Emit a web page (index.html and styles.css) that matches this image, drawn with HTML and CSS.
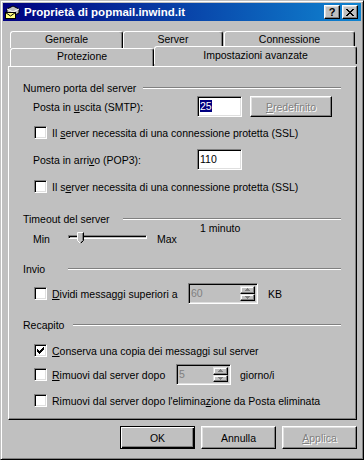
FILE: index.html
```html
<!DOCTYPE html>
<html lang="it">
<head>
    <meta charset="UTF-8">
    <meta name="viewport" content="width=device-width, initial-scale=1.0">
    <title>Proprietà di popmail.inwind.it</title>
    <link rel="stylesheet" href="styles.css">
</head>
<body>
<div class="window">
    <div class="titlebar">
        <svg class="app-icon" width="16" height="16" viewBox="0 0 16 16">
            <polygon points="3,5 9,2 15,5 15,9 9,12 3,9" fill="#c0c0c0" stroke="#000" stroke-width="1"/>
            <polyline points="3,5 9,8 15,5" fill="none" stroke="#fff"/>
            <line x1="9" y1="8" x2="9" y2="12" stroke="#808080"/>
            <rect x="1.5" y="8.5" width="10" height="6" fill="#ffff80" stroke="#000"/>
            <polyline points="1.5,8.5 6.5,12 11.5,8.5" fill="none" stroke="#000"/>
        </svg>
        <span class="title">Proprietà di popmail.inwind.it</span>
        <div class="caption-btns">
            <span class="cap-btn help">?</span>
            <span class="cap-btn close">
                <svg width="8" height="7" viewBox="0 0 8 7">
                    <path d="M0 0h2v1H0z M6 0h2v1H6z M1 1h2v1H1z M5 1h2v1H5z M2 2h4v1H2z M3 3h2v1H3z M2 4h4v1H2z M1 5h2v1H1z M5 5h2v1H5z M0 6h2v1H0z M6 6h2v1H6z" fill="#000"/>
                </svg>
            </span>
        </div>
    </div>

    <div class="content">
        <div class="tabs">
            <div class="tab-row">
                <div class="tab t-generale">Generale</div>
                <div class="tab t-server">Server</div>
                <div class="tab t-conn">Connessione</div>
            </div>
            <div class="tab-row">
                <div class="tab t-prot">Protezione</div>
                <div class="tab active t-imp">Impostazioni avanzate</div>
            </div>
        </div>

        <div class="panel">
            <div class="group-head">
                <span class="head-label w-porta">Numero porta del server</span>
                <span class="etched"></span>
            </div>
            <div class="field-row smtp">
                <span class="field-label">Posta in <u>u</u>scita (SMTP):</span>
                <span class="edit"><span class="selected">25</span></span>
                <span class="btn disabled predef"><u>P</u>redefinito</span>
            </div>
            <div class="check-row ssl1">
                <span class="checkbox"></span>
                <span>Il <u>s</u>erver necessita di una connessione protetta (SSL)</span>
            </div>
            <div class="field-row pop3">
                <span class="field-label">Posta in arri<u>v</u>o (POP3):</span>
                <span class="edit">110</span>
            </div>
            <div class="check-row ssl2">
                <span class="checkbox"></span>
                <span>Il s<u>e</u>rver necessita di una connessione protetta (SSL)</span>
            </div>

            <div class="group-head timeout-head">
                <span class="head-label w-timeout">Timeout del server</span>
                <span class="etched"></span>
            </div>
            <div class="minute-label">1 minuto</div>
            <div class="slider-row">
                <span class="slider-min">Min</span>
                <div class="slider">
                    <div class="track"></div>
                    <svg class="thumb" width="7" height="12" viewBox="0 0 7 12">
                        <polygon points="0,0 7,0 7,8 3.5,11.5 0,8" fill="#c0c0c0"/>
                        <polyline points="0.5,8.5 0.5,0.5 6.5,0.5" fill="none" stroke="#fff"/>
                        <polyline points="5.5,1 5.5,8.5 3.5,10.5" fill="none" stroke="#808080"/>
                        <polyline points="6.5,0.5 6.5,8.5 3.5,11.5" fill="none" stroke="#000"/>
                        <line x1="0.5" y1="8.5" x2="3.5" y2="11.5" stroke="#fff"/>
                    </svg>
                </div>
                <span class="slider-max">Max</span>
            </div>

            <div class="group-head invio-head">
                <span class="head-label w-invio">Invio</span>
                <span class="etched"></span>
            </div>
            <div class="check-row spin-row dividi">
                <span class="checkbox"></span>
                <span class="check-label w-dividi"><u>D</u>ividi messaggi superiori a</span>
                <span class="spin w-60">
                    <span class="spin-text">60</span>
                    <span class="spin-btns">
                        <span class="spin-btn"><svg width="5" height="3" viewBox="0 0 5 3"><path d="M2 0h1v1h1v1h1v1H0V2h1V1h1z" fill="#808080"/></svg></span>
                        <span class="spin-btn"><svg width="5" height="3" viewBox="0 0 5 3"><path d="M0 0h5v1H4v1H3v1H2V2H1V1H0z" fill="#808080"/></svg></span>
                    </span>
                </span>
                <span class="unit kb">KB</span>
            </div>

            <div class="group-head recapito-head">
                <span class="head-label w-recapito">Recapito</span>
                <span class="etched"></span>
            </div>
            <div class="check-row conserva">
                <span class="checkbox">
                    <svg width="7" height="7" viewBox="0 0 7 7">
                        <path d="M0 2h1v3H0z M1 3h1v3H1z M2 4h1v3H2z M3 3h1v3H3z M4 2h1v3H4z M5 1h1v3H5z M6 0h1v3H6z" fill="#000"/>
                    </svg>
                </span>
                <span><u>C</u>onserva una copia dei messaggi sul server</span>
            </div>
            <div class="check-row spin-row rimuovi">
                <span class="checkbox"></span>
                <span class="check-label w-rimuovi"><u>R</u>imuovi dal server dopo</span>
                <span class="spin w-5">
                    <span class="spin-text">5</span>
                    <span class="spin-btns">
                        <span class="spin-btn"><svg width="5" height="3" viewBox="0 0 5 3"><path d="M2 0h1v1h1v1h1v1H0V2h1V1h1z" fill="#808080"/></svg></span>
                        <span class="spin-btn"><svg width="5" height="3" viewBox="0 0 5 3"><path d="M0 0h5v1H4v1H3v1H2V2H1V1H0z" fill="#808080"/></svg></span>
                    </span>
                </span>
                <span class="unit giorni">giorno/i</span>
            </div>
            <div class="check-row elimina">
                <span class="checkbox"></span>
                <span>Rimuovi dal server dopo l'elimina<u>z</u>ione da Posta eliminata</span>
            </div>
        </div>

        <div class="buttons">
            <span class="btn default">OK</span>
            <span class="btn">Annulla</span>
            <span class="btn disabled"><u>A</u>pplica</span>
        </div>
    </div>
</div>
</body>
</html>
```

FILE: styles.css
```css
* {
    box-sizing: border-box;
}
body {
    margin: 0;
    background: #c0c0c0;
    font-family: "Liberation Sans", Arial, sans-serif;
    font-size: 10.5px;
    color: #000;
}
u {
    text-underline-offset: 1px;
}
.window {
    width: 364px;
    height: 460px;
    background: #c0c0c0;
    border: 1px solid;
    border-color: #c0c0c0 #000 #000 #c0c0c0;
    box-shadow: inset 1px 1px #fff, inset -1px -1px #808080;
    padding: 2px;
}

/* title bar */
.titlebar {
    height: 18px;
    display: flex;
    align-items: center;
    padding: 0 3px 0 1px;
    background: linear-gradient(to right, #000080, #1084d0);
    color: #fff;
}
.app-icon {
    flex: none;
}
.title {
    margin-left: 4px;
    font-weight: bold;
    font-size: 11.5px;
    white-space: nowrap;
}
.caption-btns {
    margin-left: auto;
    display: flex;
    gap: 2px;
}
.cap-btn {
    width: 16px;
    height: 14px;
    display: flex;
    align-items: center;
    justify-content: center;
    background: #c0c0c0;
    color: #000;
    border: 1px solid;
    border-color: #fff #000 #000 #fff;
    box-shadow: inset -1px -1px #808080, inset 1px 1px #dfdfdf;
    font-weight: bold;
    font-size: 11px;
    line-height: 12px;
}

/* body */
.content {
    padding: 0 4px 0 5px;
}
.tabs {
    margin-top: 10px;
}
.tab-row {
    display: flex;
    padding-left: 2px;
}
.tab {
    height: 17px;
    border: 1px solid;
    border-bottom: none;
    border-color: #fff #000 transparent #fff;
    border-radius: 3px 3px 0 0;
    box-shadow: inset -1px 0 #808080;
    text-align: center;
    line-height: 15px;
    background: #c0c0c0;
}
.tab-row + .tab-row .tab {
    height: 18px;
}
.t-generale { width: 113px; }
.t-server { width: 100px; }
.t-conn { width: 131px; margin-left: 1px; }
.t-prot { width: 144px; }
.t-imp {
    width: 203px;
}
.tab.active {
    height: 21px;
    margin-top: -2px;
    margin-bottom: -1px;
    position: relative;
    z-index: 1;
    line-height: 17px;
}

.panel {
    width: 349px;
    height: 354px;
    border: 1px solid;
    border-color: #fff #000 #000 #fff;
    box-shadow: inset -1px -1px #808080;
    padding: 0 15px 0 14px;
    display: flex;
    flex-direction: column;
}
.group-head {
    height: 13px;
    display: flex;
    align-items: center;
    margin-top: 14px;
    flex: none;
}
.head-label {
    flex: none;
    white-space: nowrap;
}
.w-porta { width: 120px; }
.w-timeout { width: 100px; }
.w-invio { width: 45px; }
.w-recapito { width: 50px; }
.etched {
    flex: 1;
    height: 2px;
    border-top: 1px solid #808080;
    border-bottom: 1px solid #fff;
}
.timeout-head { margin-top: 19px; }
.invio-head { margin-top: 17px; }
.recapito-head { margin-top: 14px; }

.field-row {
    height: 21px;
    display: flex;
    align-items: center;
    padding-left: 10px;
    flex: none;
}
.smtp { margin-top: 2px; }
.pop3 { margin-top: 10px; }
.field-label {
    width: 164px;
    flex: none;
}
.edit {
    width: 45px;
    height: 21px;
    background: #fff;
    border: 1px solid;
    border-color: #808080 #fff #fff #808080;
    box-shadow: inset 1px 1px #000, inset -1px -1px #dfdfdf;
    padding: 2px 0 0 2px;
    line-height: 15px;
}
.selected {
    background: #000080;
    color: #fff;
}

.btn {
    width: 75px;
    height: 23px;
    display: flex;
    align-items: center;
    justify-content: center;
    background: #c0c0c0;
    border: 1px solid;
    border-color: #fff #000 #000 #fff;
    box-shadow: inset -1px -1px #808080, inset 1px 1px #dfdfdf;
}
.btn.default {
    border-color: #000;
    box-shadow: inset 1px 1px #fff, inset -1px -1px #000, inset -2px -2px #808080;
}
.btn.disabled {
    color: #808080;
    text-shadow: 1px 1px #fff;
}
.predef {
    width: 82px;
    height: 21px;
    margin-left: 8px;
}

.check-row {
    height: 13px;
    display: flex;
    align-items: center;
    padding-left: 11px;
    flex: none;
    white-space: nowrap;
}
.ssl1 { margin-top: 9px; }
.ssl2 { margin-top: 10px; }
.conserva { margin-top: 13px; }
.elimina { margin-top: 9px; }
.checkbox {
    width: 13px;
    height: 13px;
    flex: none;
    margin-right: 5px;
    background: #fff;
    border: 1px solid;
    border-color: #808080 #fff #fff #808080;
    box-shadow: inset 1px 1px #000, inset -1px -1px #dfdfdf;
    padding: 2px;
    display: flex;
}

.minute-label {
    height: 10px;
    line-height: 10px;
    margin-top: -2px;
    padding-left: 177px;
    flex: none;
}
.slider-row {
    height: 12px;
    display: flex;
    align-items: center;
    padding-left: 10px;
    flex: none;
}
.slider-min {
    width: 35px;
    flex: none;
}
.slider {
    width: 79px;
    height: 12px;
    position: relative;
    flex: none;
}
.track {
    margin-top: 2px;
    height: 4px;
    border: 1px solid;
    border-color: #808080 #fff #fff #808080;
    box-shadow: inset 1px 1px #000;
    background: #c0c0c0;
}
.thumb {
    position: absolute;
    left: 9px;
    top: -1px;
}
.slider-max {
    margin-left: 10px;
}

.spin-row {
    height: 21px;
}
.dividi { margin-top: 8px; }
.rimuovi { margin-top: 7px; }
.check-label {
    flex: none;
}
.w-dividi { width: 136px; }
.w-rimuovi { width: 124px; }
.spin {
    height: 21px;
    display: flex;
    background: #c0c0c0;
    border: 1px solid;
    border-color: #808080 #fff #fff #808080;
    box-shadow: inset 1px 1px #000, inset -1px -1px #dfdfdf;
    padding: 2px 2px 2px 2px;
    flex: none;
}
.w-60 { width: 70px; }
.w-5 { width: 55px; }
.spin-text {
    flex: 1;
    color: #808080;
    line-height: 15px;
}
.spin-btns {
    width: 15px;
    display: flex;
    flex-direction: column;
}
.spin-btn {
    flex: 1;
    display: flex;
    align-items: center;
    justify-content: center;
    background: #c0c0c0;
    border: 1px solid;
    border-color: #dfdfdf #000 #000 #dfdfdf;
    box-shadow: inset -1px -1px #808080, inset 1px 1px #fff;
}
.kb { margin-left: 10px; }
.giorni { margin-left: 9px; }

.buttons {
    display: flex;
    justify-content: flex-end;
    gap: 6px;
    margin-top: 6px;
}
```
